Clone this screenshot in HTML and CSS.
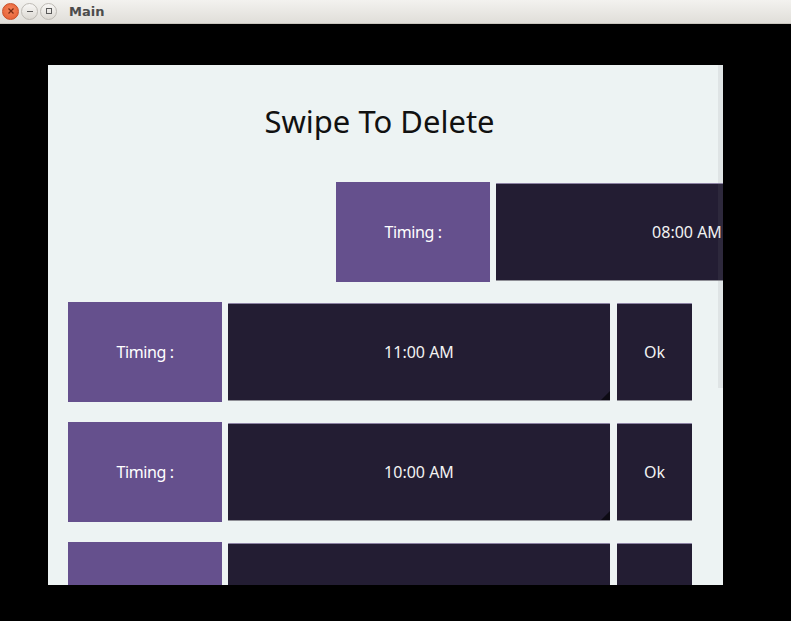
FILE: index.html
```html
<!DOCTYPE html>
<html>
<head>
<meta charset="utf-8">
<link rel="stylesheet" href="styles.css">
</head>
<body>
<div class="titlebar">
  <div class="buttons">
    <span class="wbtn close"><svg width="8" height="8" viewBox="0 0 8 8"><path d="M1.5 1.5L6.5 6.5M6.5 1.5L1.5 6.5" stroke="#7a2a12" stroke-width="1.3"/></svg></span>
    <span class="wbtn"><svg width="8" height="8" viewBox="0 0 8 8"><path d="M1 4.5H7" stroke="#5a5a5a" stroke-width="1"/></svg></span>
    <span class="wbtn"><svg width="8" height="8" viewBox="0 0 8 8"><rect x="1.5" y="1.5" width="5" height="5" fill="none" stroke="#5a5a5a" stroke-width="1"/></svg></span>
  </div>
  <span class="wtitle">Main</span>
</div>
<div class="stage">
  <div class="app">
    <div class="scrollbar"></div>
    <h1 class="heading">Swipe To Delete</h1>
    <div class="list">
      <div class="row swiped">
        <div class="label">Timing :</div>
        <div class="time">08:00 AM</div>
        <div class="ok">Ok</div>
      </div>
      <div class="row">
        <div class="label">Timing :</div>
        <div class="time">11:00 AM</div>
        <div class="ok">Ok</div>
      </div>
      <div class="row">
        <div class="label">Timing :</div>
        <div class="time">10:00 AM</div>
        <div class="ok">Ok</div>
      </div>
      <div class="row">
        <div class="label"></div>
        <div class="time"></div>
        <div class="ok"></div>
      </div>
    </div>
  </div>
</div>
</body>
</html>
```
FILE: styles.css
```css
html, body {
  margin: 0;
  padding: 0;
  background: #000;
  width: 791px;
  height: 621px;
  overflow: hidden;
}
.titlebar {
  height: 24px;
  background: linear-gradient(#f3f2ef, #e0ded9);
  display: flex;
  align-items: center;
  box-sizing: border-box;
  border-bottom: 1px solid #c9c6c0;
}
.buttons {
  display: flex;
  gap: 2px;
  padding-left: 2px;
  margin-top: -1px;
}
.wbtn {
  width: 17px;
  height: 17px;
  border-radius: 50%;
  box-sizing: border-box;
  border: 1px solid #bdbab4;
  background: linear-gradient(#f8f7f5, #dcd9d3);
  display: flex;
  align-items: center;
  justify-content: center;
}
.wbtn.close {
  border-color: #c9502a;
  background: radial-gradient(circle at 50% 40%, #f5845a, #e35b2f);
}
.wtitle {
  margin-left: 12px;
  font-family: "DejaVu Sans", sans-serif;
  font-weight: bold;
  font-size: 13px;
  color: #4c4c4c;
  margin-top: -1px;
}
.stage {
  padding: 41px 0 0 48px;
}
.app {
  position: relative;
  width: 675px;
  height: 520px;
  background: #edf3f3;
  overflow: hidden;
  font-family: "Noto Sans", "Open Sans", sans-serif;
}
.scrollbar {
  position: absolute;
  right: 0;
  top: 0;
  width: 5px;
  height: 323px;
  background: rgba(120, 120, 130, 0.12);
  z-index: 2;
}
.heading {
  margin: 0;
  height: 117px;
  padding: 36px 12px 0 0;
  box-sizing: border-box;
  text-align: center;
  font-weight: normal;
  font-size: 31px;
  line-height: 40px;
  color: #111;
}
.list {
  display: flex;
  flex-direction: column;
  gap: 20px;
  padding-left: 20px;
}
.row {
  display: flex;
  height: 100px;
  flex-shrink: 0;
}
.row.swiped {
  margin-left: 268px;
}
.label {
  width: 154px;
  flex-shrink: 0;
  background: #65508d;
  color: #fff;
  display: flex;
  align-items: center;
  justify-content: center;
  font-size: 16px;
  letter-spacing: -0.4px;
}
.time, .ok {
  position: relative;
  margin-top: 1px;
  height: 98px;
  flex-shrink: 0;
  box-sizing: border-box;
  background: #231d33;
  border-top: 1px solid #8c82a3;
  border-bottom: 1px solid #8f8f96;
  color: #f2f2f2;
  display: flex;
  align-items: center;
  justify-content: center;
  font-size: 16px;
  border-radius: 1px;
}
.time {
  width: 382px;
  margin-left: 6px;
}
.time::after {
  content: "";
  position: absolute;
  right: 0;
  bottom: 0;
  width: 0;
  height: 0;
  border-left: 9px solid transparent;
  border-bottom: 9px solid #0d0a14;
}
.ok {
  width: 75px;
  margin-left: 7px;
}
```
